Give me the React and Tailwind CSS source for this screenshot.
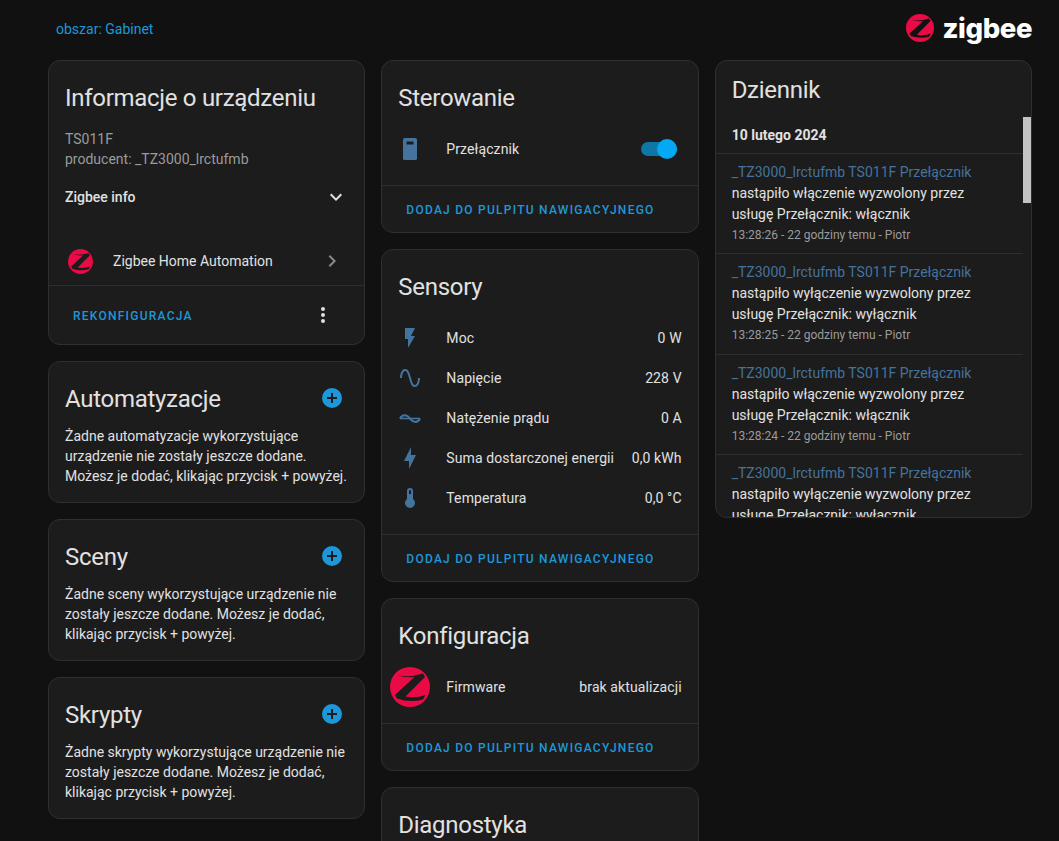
const FONT = "font-['Roboto','Liberation_Sans',sans-serif]";

function Mdi({ d, className = "", size = 24 }) {
  return (
    <svg width={size} height={size} viewBox="0 0 24 24" fill="currentColor" className={`shrink-0 ${className}`}>
      <path d={d} />
    </svg>
  );
}

const P = {
  plus: "M17,13H13V17H11V13H7V11H11V7H13V11H17M12,2A10,10 0 0,0 2,12A10,10 0 0,0 12,22A10,10 0 0,0 22,12A10,10 0 0,0 12,2Z",
  down: "M7.41,8.58L12,13.17L16.59,8.58L18,10L12,16L6,10L7.41,8.58Z",
  right: "M8.59,16.58L13.17,12L8.59,7.41L10,6L16,12L10,18L8.59,16.58Z",
  dots: "M12,16A2,2 0 0,1 14,18A2,2 0 0,1 12,20A2,2 0 0,1 10,18A2,2 0 0,1 12,16M12,10A2,2 0 0,1 14,12A2,2 0 0,1 12,14A2,2 0 0,1 10,12A2,2 0 0,1 12,10M12,4A2,2 0 0,1 14,6A2,2 0 0,1 12,8A2,2 0 0,1 10,6A2,2 0 0,1 12,4Z",
  flash: "M7,2V13H10V22L17,10H13L17,2H7Z",
  sine: "M16.5,21C13.5,21 12.31,16.76 11.05,12.28C10.14,9.04 9,5 7.5,5C4.11,5 4,11.93 4,12H2C2,11.63 2.06,3 7.5,3C10.5,3 11.71,7.25 12.97,11.74C13.86,14.94 15,19 16.5,19C19.94,19 20.03,12.07 20.03,12H22C22,12.37 21.94,21 16.5,21Z",
  bolt: "M11 15H6L13 1V9H18L11 23V15Z",
  therm: "M15 13V5A3 3 0 0 0 9 5V13A5 5 0 1 0 15 13M12 4A1 1 0 0 1 13 5V8H11V5A1 1 0 0 1 12 4Z",
};

function ZigbeeMark({ size, bg = "#1c1c1c" }) {
  return (
    <svg width={size} height={size} viewBox="0 0 40 40" className="shrink-0">
      <circle cx="20" cy="20" r="20" fill="#ea0a45" />
      <path d="M7 8Q19 11 33 6.5L35 10L15.5 29.5Q26 31.5 35.5 28L33 32.5Q20 36 7 31.5L5 28L24.5 10Q14 11 7 8Z" fill={bg} />
    </svg>
  );
}

function CurrentAc() {
  return (
    <svg width="24" height="24" viewBox="0 0 24 24" className="shrink-0 text-[#44739e]" fill="none" stroke="currentColor">
      <path d="M2 12.5C4 8 9 8 12 12.5C15 17 20 17 22 12.5" strokeWidth="2" />
      <path d="M2 12.5H22" strokeWidth="1.6" />
    </svg>
  );
}

function SwitchIcon() {
  return (
    <svg width="24" height="24" viewBox="0 0 24 24" className="shrink-0">
      <rect x="5" y="1" width="14" height="22" rx="1.6" fill="#44739e" />
      <rect x="8.5" y="4.5" width="7" height="3" fill="#1c1c1c" />
    </svg>
  );
}

function Card({ children, className = "" }) {
  return <div className={`rounded-xl border border-[#2f2f2f] bg-[#1c1c1c] ${className}`}>{children}</div>;
}

function Title({ children, right }) {
  return (
    <div className="flex h-[52px] items-center justify-between pt-[21px] pb-px pl-4 pr-5">
      <h2 className="pt-[2px] text-2xl leading-8 font-normal tracking-[-0.012em] text-[#e1e1e1]">{children}</h2>
      {right}
    </div>
  );
}

function FootButton({ children }) {
  return (
    <div className="box-content flex h-[46px] items-center border-t border-[#2f2f2f] pl-6 pt-px -mb-px">
      <span className="text-xs font-medium uppercase tracking-[1.25px] text-[#1c98da]">{children}</span>
    </div>
  );
}

function EmptyCard({ title, text }) {
  return (
    <Card>
      <Title right={<Mdi d={P.plus} className="text-[#1c98da]" />}>{title}</Title>
      <p className="mt-3 pb-4 pl-4 pr-4 text-sm leading-5 text-[#e1e1e1]">{text}</p>
    </Card>
  );
}

function Row({ icon, label, value, right }) {
  return (
    <div className="flex h-10 items-center pl-4 pr-4 tracking-[0.1px]">
      <div className="flex w-6 shrink-0 justify-center">{icon}</div>
      <span className="ml-6 flex-1 text-sm text-[#e1e1e1]">{label}</span>
      {value && <span className="text-sm text-[#e1e1e1]">{value}</span>}
      {right}
    </div>
  );
}

const log = [
  ["włączenie", "włącznik", "13:28:26"],
  ["wyłączenie", "wyłącznik", "13:28:25"],
  ["włączenie", "włącznik", "13:28:24"],
  ["wyłączenie", "wyłącznik", "13:28:23"],
];

export default function App() {
  return (
    <div className={`h-[841px] overflow-hidden bg-[#111111] ${FONT}`}>
      <header className="flex h-[60px] items-center justify-between pl-14 pr-[27px]">
        <a className="-mt-[2px] text-sm text-[#1c98da]">obszar: Gabinet</a>
        <div className="-mt-[5px] flex items-center gap-2">
          <ZigbeeMark size={28} bg="#111111" />
          <span className="font-['Inter',sans-serif] text-[27.5px] leading-8 font-extrabold tracking-[-0.4px] text-white">zigbee</span>
        </div>
      </header>

      <div className="ml-12 mr-[27px] grid grid-cols-3 items-start gap-4">
        <div className="flex flex-col gap-4">
          <Card>
            <Title>Informacje o urządzeniu</Title>
            <div className="mt-4 pl-4 text-sm leading-5 text-[#9b9b9b]">
              <div>TS011F</div>
              <div>producent: _TZ3000_lrctufmb</div>
            </div>
            <div className="mt-1 flex h-12 items-center justify-between pl-4 pr-4">
              <span className="text-sm font-medium text-[#e1e1e1]">Zigbee info</span>
              <Mdi d={P.down} className="text-[#e1e1e1]" />
            </div>
            <div className="box-content -mb-px mt-4 flex h-12 items-center border-b border-[#2f2f2f] pl-[19px] pr-5">
              <ZigbeeMark size={25} />
              <span className="ml-[20px] flex-1 text-sm text-[#e1e1e1]">Zigbee Home Automation</span>
              <Mdi d={P.right} className="text-[#8a8a8a]" />
            </div>
            <div className="flex h-[59px] items-center justify-between pl-6 pr-[29px] pt-[2px]">
              <span className="text-xs font-medium uppercase tracking-[1.25px] text-[#1c98da]">Rekonfiguracja</span>
              <Mdi d={P.dots} className="-mt-[2px] text-[#e1e1e1]" />
            </div>
          </Card>
          <EmptyCard title="Automatyzacje" text="Żadne automatyzacje wykorzystujące urządzenie nie zostały jeszcze dodane. Możesz je dodać, klikając przycisk + powyżej." />
          <EmptyCard title="Sceny" text="Żadne sceny wykorzystujące urządzenie nie zostały jeszcze dodane. Możesz je dodać, klikając przycisk + powyżej." />
          <EmptyCard title="Skrypty" text="Żadne skrypty wykorzystujące urządzenie nie zostały jeszcze dodane. Możesz je dodać, klikając przycisk + powyżej." />
        </div>

        <div className="flex flex-col gap-4">
          <Card>
            <Title>Sterowanie</Title>
            <div className="py-4">
              <Row
                icon={<SwitchIcon />}
                label="Przełącznik"
                right={
                  <div className="relative mr-[5px] h-[14px] w-[36px] rounded-full bg-[#0f77a6]">
                    <div className="absolute right-0 -top-[3px] h-5 w-5 rounded-full bg-[#03a9f4]" />
                  </div>
                }
              />
            </div>
            <FootButton>Dodaj do pulpitu nawigacyjnego</FootButton>
          </Card>
          <Card>
            <Title>Sensory</Title>
            <div className="py-4">
              <Row icon={<Mdi d={P.flash} className="text-[#44739e]" />} label="Moc" value="0 W" />
              <Row icon={<Mdi d={P.sine} className="text-[#44739e]" />} label="Napięcie" value="228 V" />
              <Row icon={<CurrentAc />} label="Natężenie prądu" value="0 A" />
              <Row icon={<Mdi d={P.bolt} className="text-[#44739e]" />} label="Suma dostarczonej energii" value="0,0 kWh" />
              <Row icon={<Mdi d={P.therm} className="text-[#44739e]" />} label="Temperatura" value="0,0 °C" />
            </div>
            <FootButton>Dodaj do pulpitu nawigacyjnego</FootButton>
          </Card>
          <Card>
            <Title>Konfiguracja</Title>
            <div className="py-4">
              <div className="flex h-10 items-center pl-2 pr-4 tracking-[0.1px]">
                <ZigbeeMark size={40} />
                <span className="ml-4 flex-1 text-sm text-[#e1e1e1]">Firmware</span>
                <span className="text-sm text-[#e1e1e1]">brak aktualizacji</span>
              </div>
            </div>
            <FootButton>Dodaj do pulpitu nawigacyjnego</FootButton>
          </Card>
          <Card className="h-[200px]">
            <Title>Diagnostyka</Title>
          </Card>
        </div>

        <Card className="relative h-[458px] overflow-hidden">
          <h2 className="pt-[13px] pl-4 text-2xl leading-8 font-normal tracking-[-0.012em] text-[#e1e1e1]">Dziennik</h2>
          <div className="absolute right-0 top-[56px] h-[86px] w-2 bg-[#c4c4c4]" />
          <div className="mr-[8px] mt-[9px]">
            <div className="box-content flex h-[36px] items-center border-b border-[#2f2f2f] pl-4 pt-[2px] text-sm font-bold text-[#e1e1e1]">
              10 lutego 2024
            </div>
            {log.map(([a, b, t], i) => (
              <div key={i} className="h-[100.4px] border-b border-[#2f2f2f] pl-4 pt-[8px]">
                <div className="text-sm leading-[21px] text-[#44739e]">_TZ3000_lrctufmb TS011F Przełącznik</div>
                <div className="text-sm leading-[21px] text-[#e1e1e1]">
                  <div>nastąpiło {a} wyzwolony przez</div>
                  <div>usługę Przełącznik: {b}</div>
                </div>
                <div className="text-xs leading-[21px] text-[#9b9b9b]">{t} - 22 godziny temu - Piotr</div>
              </div>
            ))}
          </div>
        </Card>
      </div>
    </div>
  );
}
